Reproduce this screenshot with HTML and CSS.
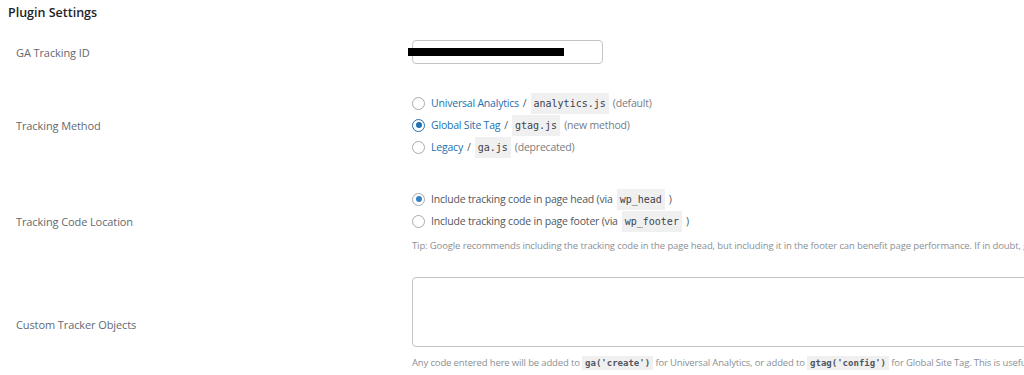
FILE: index.html
```html
<!DOCTYPE html>
<html lang="en">
<head>
  <meta charset="UTF-8">
  <meta name="viewport" content="width=device-width, initial-scale=1.0">
  <title>Plugin Settings</title>
  <link rel="stylesheet" href="styles.css">
</head>
<body>
  <h2 class="title">Plugin Settings</h2>

  <div class="form-table">
    <div class="row">
      <label class="row-label" for="ga-id">GA Tracking ID</label>
      <div class="row-field">
        <div class="text-input" id="ga-id">
          <span class="redacted"></span>
        </div>
      </div>
    </div>

    <div class="row">
      <span class="row-label">Tracking Method</span>
      <div class="row-field">
        <div class="option"><span class="radio"></span><a class="link">Universal Analytics</a> / <code>analytics.js</code> <span class="note">(default)</span></div>
        <div class="option"><span class="radio checked"></span><a class="link">Global Site Tag</a> / <code>gtag.js</code> <span class="note">(new method)</span></div>
        <div class="option"><span class="radio"></span><a class="link">Legacy</a> / <code>ga.js</code> <span class="note">(deprecated)</span></div>
      </div>
    </div>

    <div class="row row-location">
      <span class="row-label">Tracking Code Location</span>
      <div class="row-field">
        <div class="option"><span class="radio dot"></span>Include tracking code in page head (via <code>wp_head</code>)</div>
        <div class="option"><span class="radio"></span>Include tracking code in page footer (via <code>wp_footer</code>)</div>
        <p class="description">Tip: Google recommends including the tracking code in the page head, but including it in the footer can benefit page performance. If in doubt, go with the head option.</p>
      </div>
    </div>

    <div class="row row-custom">
      <label class="row-label" for="tracker-objects">Custom Tracker Objects</label>
      <div class="row-field">
        <textarea id="tracker-objects" class="code-box"></textarea>
        <p class="description small">Any code entered here will be added to <code>ga('create')</code> for Universal Analytics, or added to <code>gtag('config')</code> for Global Site Tag. This is useful for things like</p>
      </div>
    </div>
  </div>
</body>
</html>
```

FILE: styles.css
```css
* {
  box-sizing: border-box;
}

body {
  margin: 0;
  background: #fff;
  font-family: "Open Sans", "Noto Sans", sans-serif;
  font-size: 10.5px;
  letter-spacing: -0.2px;
  color: #3c434a;
  overflow: hidden;
  width: 1024px;
  height: 375px;
}

.title {
  margin: 4px 0 0 8px;
  font-size: 12.5px;
  font-weight: 600;
  color: #1d2327;
  line-height: 18px;
  letter-spacing: 0;
}

.form-table {
  width: 1200px;
  margin-top: 4px;
}

.row {
  display: grid;
  grid-template-columns: 396px 1fr;
  align-items: center;
  padding: 14px 0 14px 16px;
}

.row-location {
  padding-top: 16px;
}

.row-custom {
  padding-top: 9px;
}

.row-label {
  font-size: 11px;
  color: #646970;
  letter-spacing: -0.1px;
}

.text-input {
  width: 191px;
  height: 24px;
  border: 1px solid #c3c4c7;
  border-radius: 4px;
  display: flex;
  align-items: center;
}

.redacted {
  display: block;
  width: 156px;
  height: 8px;
  margin-left: -5px;
  background: #000;
}

.option {
  display: flex;
  align-items: center;
  line-height: 22px;
  white-space: nowrap;
  color: #50575e;
}

.option code {
  margin: 0 4px;
}

.link {
  color: #2271b1;
  margin-right: 4px;
}

.note {
  color: #787c82;
}

.radio {
  width: 13px;
  height: 13px;
  border: 1px solid #a7aaad;
  border-radius: 50%;
  margin-right: 6px;
  display: flex;
  align-items: center;
  justify-content: center;
  flex-shrink: 0;
}

.radio.checked {
  border: 1.5px solid #2271b1;
}

.radio.checked::after,
.radio.dot::after {
  content: "";
  width: 6px;
  height: 6px;
  border-radius: 50%;
  background: #2271b1;
}

.radio.dot::after {
  background: #3582c4;
}

code {
  font-family: "DejaVu Sans Mono", "Liberation Mono", monospace;
  font-size: 10px;
  letter-spacing: 0;
  background: #f0f0f1;
  color: #3c434a;
  padding: 2px 3px;
  line-height: 17px;
}

.description {
  margin: 6px 0 0;
  color: #8c8f94;
  font-size: 9.5px;
  letter-spacing: -0.12px;
  line-height: 16px;
  white-space: nowrap;
}

.description.small {
  margin-top: 8px;
  font-size: 9.5px;
  letter-spacing: -0.15px;
}

.description code {
  font-size: 9px;
  font-weight: bold;
  color: #50575e;
  padding: 2px 3px;
}

.code-box {
  display: block;
  width: 700px;
  height: 70px;
  border: 1px solid #c3c4c7;
  border-radius: 4px;
  resize: none;
}
```
